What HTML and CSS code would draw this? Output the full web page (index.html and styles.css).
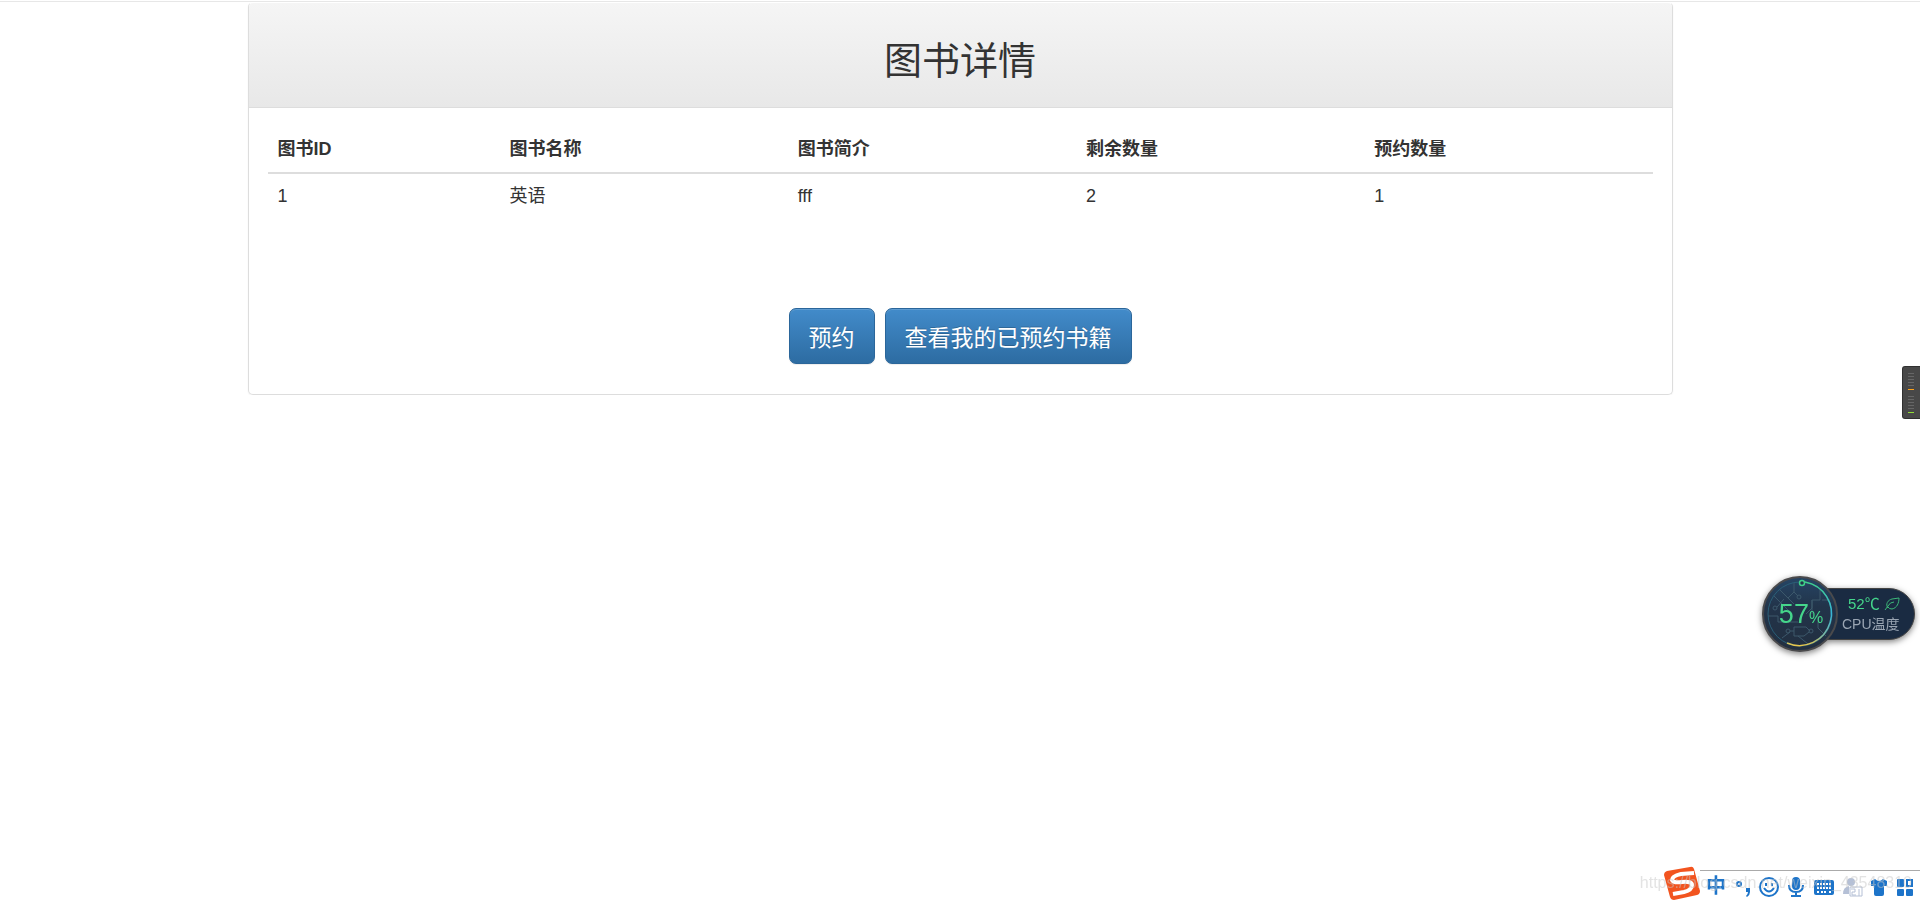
FILE: index.html
```html
<!DOCTYPE html>
<html lang="zh-CN">
<head>
    <meta charset="UTF-8">
    <title>图书详情</title>
    <link rel="stylesheet" href="styles.css">
</head>
<body>
    <div class="topline"></div>
    <div class="container">
        <div class="panel">
            <div class="panel-heading">
                <h2>图书详情</h2>
            </div>
            <div class="panel-body">
                <table class="table">
                    <thead>
                        <tr>
                            <th class="col-id">图书ID</th>
                            <th>图书名称</th>
                            <th>图书简介</th>
                            <th>剩余数量</th>
                            <th>预约数量</th>
                        </tr>
                    </thead>
                    <tbody>
                        <tr>
                            <td>1</td>
                            <td>英语</td>
                            <td>fff</td>
                            <td>2</td>
                            <td>1</td>
                        </tr>
                    </tbody>
                </table>
                <div class="actions">
                    <button type="button" class="btn">预约</button>
                    <button type="button" class="btn">查看我的已预约书籍</button>
                </div>
            </div>
        </div>
    </div>

    <!-- side meter -->
    <div class="meter">
        <svg width="18" height="53" viewBox="0 0 18 53">
            <path d="M18 0H3Q0 0 0 3V50Q0 53 3 53H18Z" fill="#303030"/>
            <path d="M18 1H3Q1 1 1 3V50Q1 52 3 52H18Z" fill="#484848"/>
            <path d="M6 7.500h6M6 10.500h6M6 13.500h6M6 16.500h6M6 19.500h6M6 30.500h6M6 33.500h6M6 36.500h6M6 39.500h6M6 42.500h6" stroke="#666"/>
            <path d="M6 23.500h6" stroke="#ffa31a"/>
            <path d="M6 46.500h6" stroke="#91dc35"/>
        </svg>
    </div>

    <!-- cpu temperature widget -->
    <div class="cpu">
        <div class="cpu-dial">
            <svg class="dial-bg" width="76" height="76" viewBox="0 0 76 76">
                <defs>
                    <linearGradient id="dial" x1="0" y1="0" x2="0" y2="1">
                        <stop offset="0" stop-color="#264565"/>
                        <stop offset="0.400" stop-color="#22344a"/>
                        <stop offset="1" stop-color="#222f40"/>
                    </linearGradient>
                    <linearGradient id="arc" x1="0" y1="0" x2="0" y2="1">
                        <stop offset="0" stop-color="#3fd08a"/>
                        <stop offset="0.500" stop-color="#38b4d8"/>
                        <stop offset="0.850" stop-color="#7fb8a0"/>
                        <stop offset="1" stop-color="#e8c64a"/>
                    </linearGradient>
                </defs>
                <circle cx="38" cy="38" r="37" fill="url(#dial)" stroke="#4a4a4c" stroke-width="2"/>
                <circle cx="38" cy="38" r="32" fill="none" stroke="#2a5f78"/>
                <g fill="none" stroke="#3c586b">
                    <path d="M32 7V16L26 22M32 16l4 4M12 20l16 16M18 14l14 14M6 40h10v6h20M15 31l7-8M58 14v10h-8v14M50 24v8l-6 6M56 40v12l8 8M60 24h8M28 55h4v-4h12l4 4M32 55v5h10l5-4M36 60l10 8M20 62l8-6"/>
                    <circle cx="37" cy="21" r="2"/>
                    <circle cx="13" cy="32" r="2"/>
                    <circle cx="26" cy="55" r="2"/>
                    <circle cx="49" cy="55" r="2"/>
                </g>
                <path d="M43 6A32 32 0 1 1 25 67" fill="none" stroke="url(#arc)" stroke-width="1.500"/>
                <circle cx="40" cy="7" r="2.500" fill="#22344a" stroke="#3fd08a" stroke-width="1.500"/>
            </svg>
            <div class="dial-text">57<small>%</small></div>
        </div>
        <div class="cpu-info">
            <div class="cpu-temp">52℃
                <svg width="16" height="14" viewBox="0 0 16 14" fill="none" stroke="#3cb878">
                    <path d="M1 13L4 9M4 11C1 7 4 3 8 2L15 1C15 6 13 11 8 12Q5 12 4 10M4 9Q6 5 10 5"/>
                </svg>
            </div>
            <div>CPU温度</div>
        </div>
    </div>

    <!-- input method bar -->
    <div class="ime">
        <svg class="ime-logo" width="36" height="34" viewBox="0 0 36 34">
            <path d="M0 9Q0 6 3 5L26 1Q29 0 30 3L36 25Q36 28 33 29L10 34Q7 34 6 31Z" fill="#f2541f"/>
            <path d="M30 7L17 8Q8 10 8 14Q9 17 18 16Q28 15 28 19Q28 24 20 26L9 28" fill="none" stroke="#fff" stroke-width="4"/>
        </svg>
        <div class="ime-bar">
            <span class="ime-lang">中</span>
            <svg width="18" height="20" viewBox="0 0 18 20"><circle cx="5" cy="7" r="2" fill="none" stroke="#1d74c9" stroke-width="2"/><path d="M12 11h4v4q0 3-3 5l-1-1q2-2 2-4h-2z" fill="#1d74c9"/></svg>
            <svg width="20" height="20" viewBox="0 0 20 20" fill="none" stroke="#1d74c9" stroke-width="2"><circle cx="10" cy="10" r="9"/><path d="M7 6v3M13 6v3M5 11q5 7 10 0"/></svg>
            <svg width="18" height="20" viewBox="0 0 18 20" fill="none" stroke="#1d74c9" stroke-width="2"><rect x="6" y="1" width="6" height="11" rx="3" fill="#1d74c9"/><path d="M2 8q0 7 7 7t7-7M9 15v4M4 19h10"/></svg>
            <svg width="22" height="20" viewBox="0 0 22 20"><rect x="1" y="3" width="20" height="15" rx="2" fill="#1d74c9"/><path d="M4 7h14M4 11h14M4 15h2M8 15h6M16 15h2" stroke="#fff" stroke-width="2" stroke-dasharray="2 1"/></svg>
            <svg width="20" height="20" viewBox="0 0 20 20"><circle cx="8" cy="5" r="4" fill="#b5c0d6"/><path d="M0 17q0-7 6-8v8z" fill="#b5c0d6"/><path d="M8 12h4v3H9v3h4M16 12v7M7 10h12v9H7z" fill="none" stroke="#b5c0d6"/></svg>
            <svg width="18" height="20" viewBox="0 0 18 20"><path d="M1 4L5 2Q9 6 13 2L17 4V9H14V17Q14 19 12 19H6Q4 19 4 17V9H1Z" fill="#1d74c9"/></svg>
            <svg width="18" height="20" viewBox="0 0 18 20" fill="#1d74c9"><rect x="1" y="2" width="7" height="8" rx="1"/><path d="M11 3h5v6h-5z" fill="none" stroke="#1d74c9" stroke-width="2"/><rect x="1" y="12" width="7" height="7" rx="1"/><rect x="10" y="12" width="7" height="7" rx="1"/></svg>
        </div>
        <div class="watermark">https://blog.csdn.net/weixin_43548310</div>
    </div>
</body>
</html>
```
FILE: styles.css
```css
body {
    margin: 0;
    font-family: "Liberation Sans", "Noto Sans CJK SC", sans-serif;
    font-size: 18px;
    line-height: 25px;
    color: #333;
    background: #fff;
}
.topline {
    height: 1px;
    margin-top: 1px;
    background-color: #e7e7e7;
}
.container {
    max-width: 1425px;
    margin: 0 auto;
}
.panel {
    border: 1px solid #ddd;
    border-top-color: #fff;
    border-radius: 5px;
    box-shadow: 0 1px 2px rgba(0, 0, 0, .05);
}
.panel-heading {
    padding: 39px 19px 27px;
    text-align: center;
    background-image: linear-gradient(to bottom, #f5f5f5, #e8e8e8);
    border-bottom: 1px solid #ddd;
    border-radius: 4px 4px 0 0;
}
.panel-heading h2 {
    margin: 0;
    font-size: 38px;
    font-weight: 400;
    line-height: 38px;
}
.panel-body {
    padding: 19px 19px 30px;
}
.table {
    width: 100%;
    table-layout: fixed;
    border-collapse: collapse;
}
.table th,
.table td {
    padding: 10px;
    text-align: left;
}
.table th {
    border-bottom: 2px solid #ddd;
}
.table .col-id {
    width: 15.3%;
}
.actions {
    display: flex;
    justify-content: center;
    gap: 10px;
    margin-top: 89px;
}
.btn {
    padding: 14px 19px 10px;
    font-family: inherit;
    font-size: 23px;
    line-height: 30px;
    color: #fff;
    text-shadow: 0 -1px 0 rgba(0, 0, 0, .2);
    background-image: linear-gradient(to bottom, #428bca, #2d6ca2);
    border: 1px solid #2b669a;
    border-radius: 7px;
    box-shadow: inset 0 1px 0 rgba(255, 255, 255, .15), 0 1px 1px rgba(0, 0, 0, .075);
    cursor: pointer;
}
.meter {
    position: fixed;
    right: 0;
    top: 366px;
    line-height: 0;
}
.cpu {
    position: fixed;
    right: 5px;
    top: 576px;
    display: flex;
    align-items: center;
    filter: drop-shadow(0 2px 3px rgba(0, 0, 0, .5));
}
.cpu-dial {
    position: relative;
    z-index: 1;
    width: 76px;
    height: 76px;
}
.dial-bg {
    display: block;
}
.dial-text {
    position: absolute;
    left: 0;
    right: 0;
    top: 24px;
    padding-left: 2px;
    text-align: center;
    font-size: 27px;
    line-height: 28px;
    color: #45d68b;
}
.dial-text small {
    font-size: 16px;
}
.cpu-info {
    box-sizing: border-box;
    width: 101px;
    height: 52px;
    margin-left: -24px;
    padding: 5px 0 0 27px;
    font-size: 14px;
    line-height: 20px;
    color: #9aa5b3;
    background-color: #1a2b42;
    border: 1px solid #444;
    border-radius: 0 26px 26px 0;
}
.cpu-temp {
    display: flex;
    align-items: center;
    gap: 4px;
    padding-left: 6px;
    font-size: 15px;
    color: #45d68b;
}
.ime {
    position: fixed;
    right: 0;
    bottom: 0;
    display: flex;
    align-items: flex-end;
}
.ime-bar {
    display: flex;
    align-items: center;
    justify-content: space-between;
    box-sizing: border-box;
    width: 220px;
    height: 30px;
    padding: 2px 6px 0 6px;
    border-top: 1px solid #aaa;
}
.ime-lang {
    font-size: 20px;
    font-weight: 700;
    color: #1d74c9;
}
.watermark {
    position: absolute;
    right: 8px;
    bottom: 5px;
    font-size: 16px;
    color: rgba(200, 200, 200, .5);
}
```
